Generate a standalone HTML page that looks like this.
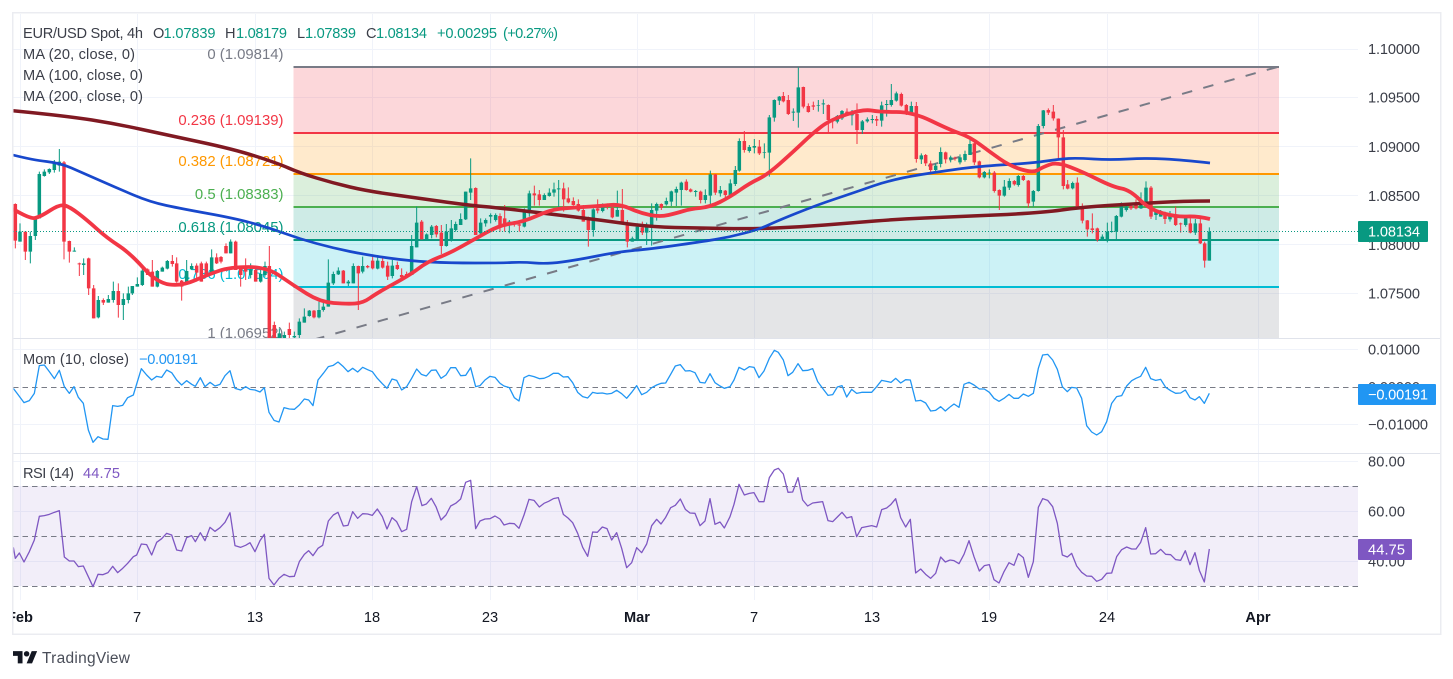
<!DOCTYPE html>
<html lang="en"><head><meta charset="utf-8"><title>EUR/USD Spot, 4h</title>
<style>
html,body{margin:0;padding:0;background:#fff;width:1453px;height:679px;overflow:hidden}
svg{display:block;filter:blur(.3px)}
text{font-family:"Liberation Sans",Arial,sans-serif;font-size:14.6px;fill:#434651}
.a{fill:#3b3e48}
.g{fill:#089981}
.f{text-anchor:end;font-size:14.9px}
.t{text-anchor:middle;fill:#131722}
</style></head><body>
<svg width="1453" height="679" viewBox="0 0 1453 679" xmlns="http://www.w3.org/2000/svg">
<defs>
<clipPath id="m"><rect x="13" y="14" width="1345" height="324"/></clipPath>
<clipPath id="b"><rect x="13" y="590" width="1345" height="44"/></clipPath>
</defs>
<rect width="1453" height="679" fill="#fff"/>

<!-- grid -->
<g stroke="#f0f3fa" stroke-width="1" fill="none" shape-rendering="crispEdges">
<path d="M20.5 14V600M137.5 14V600M255.5 14V600M372.5 14V600M490.5 14V600M637.5 14V600M754.5 14V600M872.5 14V600M989.5 14V600M1107.5 14V600M1258.5 14V600"/>
<path d="M13 49.5H1358M13 97.5H1358M13 146.5H1358M13 195.5H1358M13 244.5H1358M13 293.5H1358M13 349.5H1358M13 424.5H1358M13 461.5H1358M13 511.5H1358M13 561.5H1358"/>
</g>

<!-- fib bands -->
<g clip-path="url(#m)" shape-rendering="crispEdges">
<rect x="293.5" y="67" width="985.5" height="66" fill="#f23645" fill-opacity=".2"/>
<rect x="293.5" y="133" width="985.5" height="41" fill="#ff9800" fill-opacity=".2"/>
<rect x="293.5" y="174" width="985.5" height="33" fill="#4caf50" fill-opacity=".2"/>
<rect x="293.5" y="207" width="985.5" height="33" fill="#089981" fill-opacity=".2"/>
<rect x="293.5" y="240" width="985.5" height="47" fill="#00bcd4" fill-opacity=".2"/>
<rect x="293.5" y="287" width="985.5" height="60" fill="#787b86" fill-opacity=".2"/>
<rect x="293.5" y="66" width="985.5" height="2" fill="#787b86"/>
<rect x="293.5" y="132" width="985.5" height="2" fill="#f23645"/>
<rect x="293.5" y="173" width="985.5" height="2" fill="#ff9800"/>
<rect x="293.5" y="206" width="985.5" height="2" fill="#4caf50"/>
<rect x="293.5" y="239" width="985.5" height="2" fill="#089981"/>
<rect x="293.5" y="286" width="985.5" height="2" fill="#00bcd4"/>
</g>
<g clip-path="url(#m)">
<text class="f" x="283.5" y="59" style="fill:#787b86">0 (1.09814)</text>
<text class="f" x="283.5" y="125" style="fill:#f23645">0.236 (1.09139)</text>
<text class="f" x="283.5" y="166" style="fill:#ff9800">0.382 (1.08721)</text>
<text class="f" x="283.5" y="199" style="fill:#4caf50">0.5 (1.08383)</text>
<text class="f" x="283.5" y="232" style="fill:#089981">0.618 (1.08045)</text>
<text class="f" x="283.5" y="279" style="fill:#00bcd4">0.786 (1.07564)</text>
<text class="f" x="283.5" y="338" style="fill:#787b86">1 (1.06952)</text>
<!-- trend -->
<path d="M293 345.5L1279 66.5" stroke="#787b86" stroke-width="2" stroke-dasharray="10.5 11.5" fill="none"/>
</g>

<g clip-path="url(#m)" fill="none" stroke-linecap="butt">
<!-- candles part 1 -->
<g transform="scale(.33333)">
<path stroke="#089981" stroke-width="3" d="M60 670V725M91 695V790M106 650V720M118 515V655M133 508V530M148 505V522M163 480V518M178 447V515M223 742V755M251 775V825M295 888V955M325 885V908M340 845V908M370 880V960M385 860V910M397 858V885M412 832V860M427 805V858M472 810V862M487 800V815M502 780V808M560 780V855M575 790V810M635 748V825M692 718V760M752 790V835M782 810V848M795 785V830M838 985V1020M853 995V1020M883 995V1015M898 955V1015M913 925V968M928 930V950M957 905V955M970 905V935M985 778V920M1000 815V855M1015 802V825M1045 840V858M1060 790V850M1088 770V820M1133 765V808M1177 780V835M1235 705V825M1250 620V742M1280 700V718M1295 675V715M1339 672V740M1354 660V725M1367 665V695M1382 640V675M1397 575V660M1412 475V600M1442 655V705M1457 655V680M1472 640V670M1487 640V665"/>
<path stroke="#089981" stroke-width="10.5" d="M60 695V725M91 708V755M106 652V708M118 522V655M133 515V528M148 507V517M163 490V510M178 485V497M223 752V755M251 790V795M295 900V952M325 897V908M340 873V900M370 897V915M385 880V900M397 858V880M412 852V860M427 812V855M472 813V860M487 803V815M502 783V806M560 813V850M575 798V808M635 772V822M692 725V760M752 808V825M782 822V845M795 798V825M838 1000V1020M853 1005V1020M883 1008V1012M898 965V1005M913 950V968M928 932V948M957 930V952M970 920V930M985 848V920M1000 822V850M1015 812V823M1045 845V850M1060 798V850M1088 798V815M1133 782V806M1177 797V828M1235 738V825M1250 668V742M1280 703V718M1295 680V705M1339 695V738M1354 685V720M1367 672V690M1382 657V675M1397 575V658M1412 565V578M1442 668V700M1457 660V670M1472 645V650M1487 645V660"/>
<path stroke="#f23645" stroke-width="3" d="M46 610V745M76 695V780M192 483V778M208 722V788M238 788V828M266 773V885M281 855V955M310 895V915M355 850V953M443 805V825M457 780V860M517 765V800M530 772V848M545 840V902M590 790V845M604 785V845M619 785V830M650 760V792M663 768V790M678 730V760M707 722V810M722 800V860M737 775V840M767 800V845M808 738V1020M823 965V1020M868 968V1015M942 930V955M1030 810V850M1075 797V930M1103 795V805M1118 765V808M1148 768V806M1163 785V840M1192 785V810M1205 805V835M1220 815V835M1265 660V718M1309 675V712M1324 675V762M1427 562V705M1500 645V660"/>
<path stroke="#f23645" stroke-width="10.5" d="M46 612V722M76 695V755M192 487V725M208 723V755M238 790V793M266 775V865M281 865V955M310 900V908M355 873V915M443 808V825M457 815V860M517 783V792M530 790V845M545 842V860M590 797V818M604 790V845M619 790V825M650 772V790M663 771V785M678 738V760M707 725V810M722 805V825M737 800V815M767 810V845M808 798V1020M823 975V1020M868 987V1005M942 932V952M1030 812V850M1075 798V820M1103 798V802M1118 782V805M1148 783V803M1163 797V830M1192 795V807M1205 825V832M1220 822V830M1265 665V718M1309 678V703M1324 698V738M1427 564V705M1500 648V655"/>
</g>
<!-- candles part 2 -->
<g transform="translate(500,40) scale(.33333)">
<path stroke="#089981" stroke-width="3" d="M28 540V580M73 505V562M88 452V530M133 460V480M148 445V470M162 428V470M176 420V505M280 505V590M308 490V517M352 452V530M397 590V605M412 550V600M440 548V615M455 490V617M470 488V542M499 473V497M514 452V498M529 440V498M544 425V497M587 450V470M616 448V490M631 392V492M661 438V470M691 418V465M706 378V438M718 295V395M748 315V338M763 297V340M793 310V355M808 225V410M823 178V245M838 168V195M880 205V243M895 82V263M955 180V215M970 178V222M1012 225V250M1026 210V240M1056 210V256M1087 240V282M1102 232V248M1117 225V250M1145 185V260M1160 180V230M1174 132V200M1189 155V185M1234 185V222M1264 340V372M1307 370V395M1322 322V382"/>
<path stroke="#089981" stroke-width="10.5" d="M28 545V555M73 510V560M88 460V520M133 465V480M148 458V468M162 448V458M176 445V448M280 508V570M308 495V513M352 510V530M397 595V605M412 560V600M440 558V578M455 510V562M470 492V512M499 483V493M514 454V485M529 447V458M544 428V450M587 453V456M616 465V480M631 403V467M661 450V460M691 430V465M706 390V432M718 303V392M748 321V333M763 318V323M793 336V338M808 232V338M823 180V233M838 170V182M880 215V218M895 142V218M955 195V197M970 190V193M1012 228V245M1026 213V235M1056 218V226M1087 244V270M1102 238V244M1117 237V240M1145 196V242M1160 192V195M1174 180V195M1189 160V182M1234 198V218M1264 346V358M1307 377V390M1322 336V372"/>
<path stroke="#f23645" stroke-width="3" d="M0 520V575M14 495V575M43 543V560M58 550V575M103 437V497M118 450V497M191 428V515M205 442V490M220 472V497M235 478V515M250 495V545M265 530V620M293 478V520M322 490V508M337 500V535M367 447V552M382 540V622M427 545V585M484 490V510M559 418V452M572 445V457M602 452V490M646 402V465M676 450V473M733 273V338M778 300V345M850 156V187M865 165V225M910 140V205M925 190V218M940 185V210M985 193V278M998 235V265M1041 205V228M1071 190V312M1130 228V258M1204 158V200M1219 192V225M1249 186V368M1277 342V378M1292 362V400M1337 335V370"/>
<path stroke="#f23645" stroke-width="10.5" d="M0 530V560M14 535V560M43 548V552M58 553V557M103 460V466M118 463V480M191 445V478M205 475V487M220 483V495M235 492V512M250 510V545M265 540V570M293 505V512M322 495V497M337 503V532M367 510V550M382 548V605M427 562V578M484 492V503M559 425V450M572 448V455M602 455V480M646 403V458M676 452V465M733 303V330M778 320V340M850 168V184M865 180V222M910 141V200M925 198V216M940 196V200M985 195V240M998 237V240M1041 215V222M1071 222V270M1130 237V242M1204 162V197M1219 195V217M1249 198V357M1277 345V370M1292 370V390M1337 337V358"/>
</g>
<!-- candles part 3 -->
<g transform="translate(950,40) scale(.33333)">
<path stroke="#089981" stroke-width="3" d="M2 347V367M30 343V373M45 332V365M60 300V345M103 393V415M118 388V415M163 420V470M178 415V450M205 405V440M250 450V500M265 252V455M280 210V265M368 425V448M457 583V600M472 548V607M485 545V578M499 525V600M514 487V532M529 495V515M573 457V507M588 424V500M618 508V540M632 510V530M660 513V545M707 530V560M736 537V585M778 562V662"/>
<path stroke="#089981" stroke-width="10.5" d="M2 352V358M30 352V367M45 342V360M60 312V345M103 396V412M118 398V400M163 440V467M178 423V443M205 408V435M250 453V485M265 258V453M280 211V258M368 429V445M457 590V597M472 575V597M485 573V576M499 528V575M514 497V530M529 500V510M573 480V505M588 443V495M618 515V525M632 515V530M660 522V538M707 533V555M736 550V578M778 575V662"/>
<path stroke="#f23645" stroke-width="3" d="M15 350V362M73 308V375M88 362V415M133 393V458M148 448V510M193 420V437M220 405V423M235 420V503M295 205V225M310 195V242M325 235V355M340 270V448M353 420V448M382 412V505M397 490V550M412 540V590M427 520V580M442 563V605M543 490V510M558 478V508M603 438V537M645 515V552M677 500V558M692 548V578M721 535V580M751 537V612M764 605V683"/>
<path stroke="#f23645" stroke-width="10.5" d="M15 353V355M73 310V367M88 364V412M133 398V453M148 450V467M193 423V433M220 408V420M235 422V490M295 210V218M310 215V235M325 236V292M340 292V438M353 433V446M382 428V500M397 500V542M412 541V568M427 565V570M442 565V600M543 498V505M558 495V505M603 443V530M645 520V537M677 530V555M692 550V553M721 550V578M751 550V610M764 610V662"/>
</g>

<!-- MA 200 -->
<path stroke="#801922" stroke-width="3.5" stroke-linejoin="round" d="M13,110.7 Q67,116 92,120 Q117,124 142,129.5 Q167,135 200,142 Q233,149 255,156 Q277,163 288.5,168 Q300,173 316.5,178 Q333,183 350,187 Q367,191 392,194.5 Q417,198 442,201.5 Q467,205 483.5,206.5 Q500,208 525,211 Q550,214 575,217 Q600,220 625,223.5 Q650,227 675,227.5 Q700,228 725,228.5 Q750,229 775,228 Q800,227 825,225 Q850,223 875,221 Q900,219 925,218 Q950,217 995,215 Q1040,213 1061.5,210 Q1083,207 1108,205.5 Q1133,204 1158,202.5 Q1183,201 1210,201"/>
<!-- MA 100 -->
<path stroke="#1848cc" stroke-width="2.7" stroke-linejoin="round" d="M13,155 Q33,160 46.5,161.5 Q60,163 71.5,168 Q83,173 100,180.5 Q117,188 133.5,195 Q150,202 166.5,205.5 Q183,209 208,213.5 Q233,218 250,222.5 Q267,227 283.5,233 Q300,239 316.5,243.5 Q333,248 350,251.5 Q367,255 388.5,258 Q410,261 430,262 Q450,263 475,263 Q500,263 511.5,262.5 Q523,262 535,263 Q547,264 562,262 Q577,260 597,256 Q617,252 633.5,250.5 Q650,249 675,245.5 Q700,242 715,239.5 Q730,237 745,233 Q760,229 768.5,225 Q777,221 797,213 Q817,205 835,199 Q853,193 873,186 Q893,179 921.5,174.5 Q950,170 966.5,168 Q983,166 1008,164.5 Q1033,163 1046.5,161 Q1060,159 1068.5,158.5 Q1077,158 1093.5,159 Q1110,160 1128.5,159 Q1147,158 1165,159 Q1183,160 1210,163"/>
<!-- MA 20 -->
<path stroke="#f23645" stroke-width="3.8" stroke-linejoin="round" d="M13,209 Q30,219 35,218 Q40,217 50,210.5 Q60,204 65,205.5 Q70,207 78.5,213.5 Q87,220 97,229 Q107,238 118.5,245.5 Q130,253 143.5,268 Q157,283 169.5,284.5 Q182,286 194.5,280.5 Q207,275 218.5,271 Q230,267 248.5,267 Q267,267 280,276 Q293,285 306.5,293.5 Q320,302 333.5,303 Q347,304 355,303.5 Q363,303 370,298 Q377,293 393.5,284 Q410,275 418.5,268.5 Q427,262 438.5,257.5 Q450,253 461.5,246.5 Q473,240 486.5,232.5 Q500,225 511.5,223.5 Q523,222 536.5,216 Q550,210 558.5,209 Q567,208 583.5,207 Q600,206 610,205 Q620,204 630,208.5 Q640,213 650,215 Q660,217 668.5,215 Q677,213 683.5,211 Q690,209 700,208 Q710,207 720,202 Q730,197 740,190 Q750,183 758.5,179 Q767,175 780,163.5 Q793,152 803,142.5 Q813,133 821.5,126.5 Q830,120 846.5,114.5 Q863,109 871.5,110.5 Q880,112 896.5,112 Q913,112 931.5,121 Q950,130 960,133.5 Q970,137 980,144.5 Q990,152 1000,159 Q1010,166 1021.5,169.5 Q1033,173 1038,170 Q1043,167 1050,164.5 Q1057,162 1070,167 Q1083,172 1098,179.5 Q1113,187 1121.5,188.5 Q1130,190 1140,200 Q1150,210 1163.5,213.5 Q1177,217 1187,216.5 Q1197,216 1210,219"/>
</g>

<!-- price dotted -->
<path d="M13 231.5H1358" stroke="#089981" stroke-width="1" stroke-dasharray="1 2" fill="none"/>

<!-- RSI band and dashes -->
<rect x="13" y="486" width="1345" height="100" fill="#7e57c2" fill-opacity=".1"/>
<g stroke="#787b86" stroke-width="1" stroke-dasharray="5.5 4" fill="none">
<path d="M13 387.5H1358"/>
<path d="M13 486.5H1358"/>
<path d="M13 536.5H1358"/>
<path d="M13 586.5H1358"/>
</g>

<!-- Momentum -->
<g fill="none" stroke="#2196f3" stroke-width="3.9" stroke-linejoin="round">
<polyline transform="translate(0,335) scale(.33333)" points="40,160 55,180 72,203 88,197 103,175 118,92 133,90 148,110 163,131 178,106 193,155 208,175 222,155 235,187 250,205 265,285 279,322 294,305 309,312 324,313 338,212 353,214 368,211 383,188 400,180 424,101 440,120 455,135 470,124 485,127 500,105 515,113 530,135 545,150 560,137 575,148 586,154 601,128 615,155 630,142 645,153 660,148 675,122 690,107 705,160 722,165 737,155 750,163 765,165 780,171 793,158 807,232 822,256 837,261 852,218 868,222 883,223 898,210 913,192 926,195 939,212 954,135 970,115 985,95 1000,91 1014,81 1030,95 1044,110 1058,100 1073,111 1088,97 1103,104 1117,110 1132,130 1147,146 1161,160 1176,132 1190,136 1205,165 1220,155 1235,130 1250,102 1264,118 1279,123 1294,106 1308,105 1323,130 1338,120 1352,98 1367,98 1382,122 1397,121 1412,98 1427,155 1440,152 1455,135 1470,124 1485,127 1500,145"/>
<polyline transform="translate(500,335) scale(.33333)" points="0,145 12,153 28,158 43,188 57,198 72,128 87,121 102,125 118,131 132,130 146,124 160,115 175,115 190,126 204,125 218,143 233,172 248,185 263,189 278,172 292,175 307,174 321,177 335,175 350,166 365,176 380,190 395,172 410,152 425,179 440,172 455,158 470,150 483,145 497,144 512,118 526,93 541,89 556,108 570,107 585,113 600,142 615,144 630,116 645,143 660,153 673,160 690,155 702,135 717,97 733,105 748,95 762,97 777,128 792,108 808,70 823,46 835,52 850,75 864,122 878,112 894,86 908,107 923,106 938,101 953,140 968,160 984,181 998,179 1012,156 1026,152 1040,186 1055,163 1070,175 1085,172 1100,172 1115,172 1130,155 1145,136 1160,139 1173,142 1187,130 1202,144 1217,134 1231,135 1247,198 1262,196 1277,204 1292,228 1307,226 1322,215 1336,228 1350,216"/>
<polyline transform="translate(950,335) scale(.33333)" points="0,216 12,207 27,217 42,148 57,142 72,150 88,162 103,162 118,172 132,190 147,199 162,190 177,178 192,190 205,190 220,177 235,184 250,175 265,100 278,60 293,58 308,75 322,103 337,155 352,170 365,157 380,159 395,190 410,272 425,291 440,300 455,290 470,260 485,205 500,185 515,182 530,153 545,137 558,130 572,124 587,97 602,131 617,136 632,133 647,157 662,167 677,175 692,174 706,165 720,188 735,195 748,185 763,205 778,175"/>
</g>
<!-- RSI -->
<g fill="none" stroke="#7e57c2" stroke-width="3.9" stroke-linejoin="round">
<polyline transform="translate(0,335) scale(.33333)" points="40,637 46,670 58,654 72,681 88,650 103,615 118,544 133,542 148,538 163,532 178,527 193,666 208,678 222,678 235,695 250,693 265,725 279,755 294,718 309,719 324,713 338,694 353,713 368,700 383,685 400,665 410,660 424,627 440,629 455,660 470,622 485,611 500,595 515,600 530,645 545,648 560,608 575,602 586,620 601,593 615,617 630,577 645,589 660,578 675,562 690,533 705,632 722,637 737,631 750,623 765,650 780,617 793,598 807,730 822,750 837,730 852,718 868,725 883,724 898,680 913,658 926,647 939,662 954,640 968,631 985,558 1000,540 1014,532 1030,573 1044,571 1058,530 1073,550 1088,536 1103,537 1117,541 1132,522 1147,545 1161,582 1176,548 1190,560 1205,590 1220,583 1235,500 1250,455 1266,512 1279,507 1294,490 1308,515 1323,555 1338,540 1352,513 1367,505 1382,492 1397,442 1412,436 1427,581 1440,558 1455,552 1470,551 1485,543 1500,552"/>
<polyline transform="translate(500,335) scale(.33333)" points="0,552 12,570 28,565 43,566 57,580 72,540 87,493 102,496 118,516 132,505 146,499 160,491 175,488 190,538 204,549 218,563 233,595 248,637 263,664 278,591 292,592 307,576 321,581 335,615 350,593 365,640 380,698 395,683 410,638 425,653 440,627 455,572 470,553 483,567 497,547 512,518 526,511 541,492 556,523 570,534 585,535 600,572 615,558 630,491 645,568 660,561 673,579 690,545 702,508 717,448 733,480 748,475 762,473 777,500 792,500 808,428 823,405 835,400 850,417 864,472 878,471 894,428 908,495 923,513 938,504 953,502 968,500 984,557 998,560 1012,546 1026,532 1040,549 1055,545 1070,605 1085,578 1100,575 1115,572 1130,576 1145,524 1160,519 1173,508 1187,491 1202,548 1217,576 1231,553 1247,714 1262,702 1277,718 1292,730 1307,715 1322,666 1336,681 1350,675"/>
<polyline transform="translate(950,335) scale(.33333)" points="0,675 12,677 27,686 42,658 57,617 72,665 88,708 103,692 118,689 132,734 147,744 162,710 177,683 192,691 205,656 220,668 235,727 250,680 265,517 278,491 293,496 308,515 322,565 337,660 352,666 365,655 380,693 395,712 410,723 425,724 440,739 455,733 470,715 485,714 500,665 515,644 530,636 545,642 558,642 572,622 587,578 602,657 617,656 632,643 647,658 662,659 677,674 692,676 706,647 720,689 735,653 748,706 763,741 778,642"/>
</g>

<!-- frame -->
<g shape-rendering="crispEdges">
<path d="M13 338.5H1440M13 453.5H1440" stroke="#e0e3eb" stroke-width="1" fill="none"/>
<rect x="12" y="12" width="1429" height="1.5" fill="#ebecf1"/>
<rect x="12" y="12" width="1.5" height="623" fill="#ebecf1"/>
<rect x="1440" y="12" width="1.5" height="623" fill="#ebecf1"/>
<rect x="12" y="633.5" width="1429" height="1.5" fill="#ebecf1"/>
</g>

<!-- legend -->
<text class="a" x="23" y="38" textLength="120">EUR/USD Spot, 4h</text>
<text class="a" x="153" y="38">O</text><text class="g" x="163.5" y="38" textLength="52">1.07839</text>
<text class="a" x="225" y="38">H</text><text class="g" x="236" y="38" textLength="51">1.08179</text>
<text class="a" x="297" y="38">L</text><text class="g" x="305" y="38" textLength="51">1.07839</text>
<text class="a" x="366" y="38">C</text><text class="g" x="376" y="38" textLength="51">1.08134</text>
<text class="g" x="437" y="38" textLength="60">+0.00295</text>
<text class="g" x="503" y="38" textLength="55">(+0.27%)</text>
<text class="a" x="23" y="59" textLength="112">MA (20, close, 0)</text>
<text class="a" x="23" y="80" textLength="120">MA (100, close, 0)</text>
<text class="a" x="23" y="101" textLength="120">MA (200, close, 0)</text>
<text class="a" x="23" y="364" textLength="106">Mom (10, close)</text>
<text x="139" y="364" style="fill:#2196f3" textLength="59">−0.00191</text>
<text class="a" x="23" y="478" textLength="51">RSI (14)</text>
<text x="83" y="478" style="fill:#7e57c2" textLength="37">44.75</text>

<!-- axis labels -->
<g class="ax">
<text class="a" x="1368" y="54" textLength="52">1.10000</text>
<text class="a" x="1368" y="102.5" textLength="52">1.09500</text>
<text class="a" x="1368" y="152" textLength="52">1.09000</text>
<text class="a" x="1368" y="201" textLength="52">1.08500</text>
<text class="a" x="1368" y="250" textLength="52">1.08000</text>
<text class="a" x="1368" y="298.5" textLength="52">1.07500</text>
<text class="a" x="1368" y="354.5" textLength="52">0.01000</text>
<text class="a" x="1368" y="392" textLength="52">0.00000</text>
<text class="a" x="1368" y="429.5" textLength="60">−0.01000</text>
<text class="a" x="1368" y="466.5" textLength="37">80.00</text>
<text class="a" x="1368" y="516.5" textLength="37">60.00</text>
<text class="a" x="1368" y="566.5" textLength="37">40.00</text>
</g>
<rect x="1358" y="221" width="70" height="21" rx="1" fill="#089981"/>
<text x="1368" y="236.5" style="fill:#fff" textLength="52">1.08134</text>
<rect x="1358" y="384" width="78" height="21" rx="1" fill="#2196f3"/>
<text x="1368" y="399.5" style="fill:#fff" textLength="60">−0.00191</text>
<rect x="1358" y="539" width="54" height="21" rx="1" fill="#7e57c2"/>
<text x="1368" y="554.5" style="fill:#fff" textLength="37">44.75</text>

<!-- time axis -->
<g clip-path="url(#b)">
<text class="t" x="20" y="622" style="font-weight:bold">Feb</text>
</g>
<text class="t" x="137" y="622">7</text>
<text class="t" x="255" y="622">13</text>
<text class="t" x="372" y="622">18</text>
<text class="t" x="490" y="622">23</text>
<text class="t" x="637" y="622" style="font-weight:bold">Mar</text>
<text class="t" x="754" y="622">7</text>
<text class="t" x="872" y="622">13</text>
<text class="t" x="989" y="622">19</text>
<text class="t" x="1107" y="622">24</text>
<text class="t" x="1258" y="622" style="font-weight:bold">Apr</text>

<!-- TradingView logo -->
<g transform="translate(13,648.4) scale(.68)" fill="#131722">
<path d="M14 22H7V11H0V4h14v18zM28 22h-8l7.5-18h8L28 22z"/><circle cx="20" cy="8" r="4"/>
</g>
<text x="42" y="663" style="font-size:15.5px;fill:#4a4e59" textLength="88">TradingView</text>
</svg>
</body></html>
